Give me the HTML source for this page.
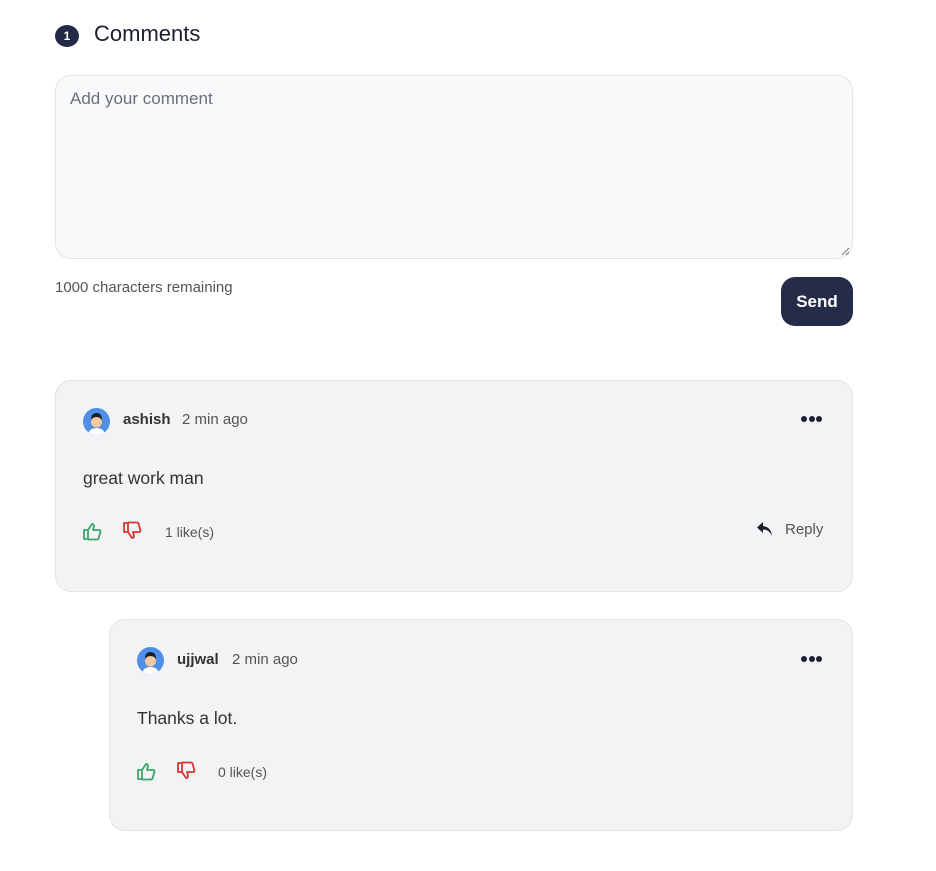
<!DOCTYPE html>
<html><head><meta charset="utf-8"><style>
*{box-sizing:border-box;margin:0;padding:0}
body{width:936px;height:871px;background:#fff;font-family:"Liberation Sans",sans-serif;color:#333;position:relative}
.a{position:absolute}
.badge{left:55px;top:25px;width:24px;height:22px;border-radius:50%;background:#232a48;color:#fff;font-size:12px;font-weight:bold;text-align:center;line-height:22px}
.h{left:94px;top:21px;font-size:22px;color:#1c1f2e}
.ta{left:55px;top:75px;width:798px;height:184px;border:1px solid #e3e5e8;border-radius:16px;background:#f8f9fa}
.ph{left:70px;top:89px;font-size:17px;color:#6b7078}
.rem{left:55px;top:279px;font-size:15px;color:#555}
.send{left:781px;top:277px;width:72px;height:49px;border-radius:14px;background:#252c4a;color:#fff;font-weight:bold;font-size:17px;text-align:center;line-height:49px}
.card{border:1px solid #e2e4e8;border-radius:16px;background:#f2f3f5}
.av{width:27px;height:27px;border-radius:50%;background:#4f8fe8;overflow:hidden}
.name{font-size:15px;font-weight:bold;color:#333}
.time{font-size:15px;color:#555}
.body{font-size:17.5px;color:#333}
.likes{font-size:14px;color:#555}
.dots{font-size:0}
.dots i{display:inline-block;width:6px;height:6px;border-radius:50%;background:#1c1f2e;margin-right:1.5px}
</style></head><body>
<div class="a badge">1</div>
<div class="a h">Comments</div>
<div class="a ta"><svg class="a" style="right:2px;bottom:2px" width="10" height="10"><path d="M9 2L2 9M9 6L6 9" stroke="#777" stroke-width="1"/></svg></div>
<div class="a ph">Add your comment</div>
<div class="a rem">1000 characters remaining</div>
<div class="a send">Send</div>

<div class="a card" style="left:55px;top:380px;width:798px;height:212px"></div>
<div class="a av" style="left:83px;top:408px"><svg width="27" height="27"><circle cx="13.5" cy="14" r="5.5" fill="#f2c9a0"/><path d="M8 12q0-7 5.5-7t5.5 7q-2-3-5.5-3T8 12z" fill="#1c1f2e"/><path d="M5 27q1-7 8.5-7t8.5 7z" fill="#fff"/></svg></div>
<div class="a name" style="left:123px;top:411px">ashish</div>
<div class="a time" style="left:182px;top:411px">2 min ago</div>
<div class="a dots" style="left:801px;top:416px"><i></i><i></i><i></i></div>
<div class="a body" style="left:83px;top:468px">great work man</div>
<svg class="a" style="left:82px;top:521px" width="20" height="20"><path d="M2 9h4v9H2zM6 9l4-6q2 0 2 2l-1 4h6q1.5 0 1.5 1.5l-2 7q-.5 1-1.5 1H6" fill="none" stroke="#3aa66a" stroke-width="1.8" stroke-linejoin="round"/></svg>
<svg class="a" style="left:122px;top:521px" width="20" height="20"><path d="M2 2h4v9H2zM6 11l4 6q2 0 2-2l-1-4h6q1.5 0 1.5-1.5l-2-7q-.5-1-1.5-1H6" fill="none" stroke="#d33" stroke-width="1.8" stroke-linejoin="round"/></svg>
<div class="a likes" style="left:165px;top:524px">1 like(s)</div>
<svg class="a" style="left:756px;top:521px" width="18" height="16"><path d="M7 1L1 6.5 7 12V8.5q6 0 9 6.5-1-9-9-10z" fill="#1c1f2e"/></svg>
<div class="a likes" style="left:785px;top:521px;font-size:15px">Reply</div>

<div class="a card" style="left:109px;top:619px;width:744px;height:212px"></div>
<div class="a av" style="left:137px;top:647px"><svg width="27" height="27"><circle cx="13.5" cy="14" r="5.5" fill="#f2c9a0"/><path d="M8 12q0-7 5.5-7t5.5 7q-2-3-5.5-3T8 12z" fill="#1c1f2e"/><path d="M5 27q1-7 8.5-7t8.5 7z" fill="#fff"/></svg></div>
<div class="a name" style="left:177px;top:651px">ujjwal</div>
<div class="a time" style="left:232px;top:651px">2 min ago</div>
<div class="a dots" style="left:801px;top:656px"><i></i><i></i><i></i></div>
<div class="a body" style="left:137px;top:708px">Thanks a lot.</div>
<svg class="a" style="left:136px;top:761px" width="20" height="20"><path d="M2 9h4v9H2zM6 9l4-6q2 0 2 2l-1 4h6q1.5 0 1.5 1.5l-2 7q-.5 1-1.5 1H6" fill="none" stroke="#3aa66a" stroke-width="1.8" stroke-linejoin="round"/></svg>
<svg class="a" style="left:176px;top:761px" width="20" height="20"><path d="M2 2h4v9H2zM6 11l4 6q2 0 2-2l-1-4h6q1.5 0 1.5-1.5l-2-7q-.5-1-1.5-1H6" fill="none" stroke="#d33" stroke-width="1.8" stroke-linejoin="round"/></svg>
<div class="a likes" style="left:218px;top:764px">0 like(s)</div>
</body></html>
